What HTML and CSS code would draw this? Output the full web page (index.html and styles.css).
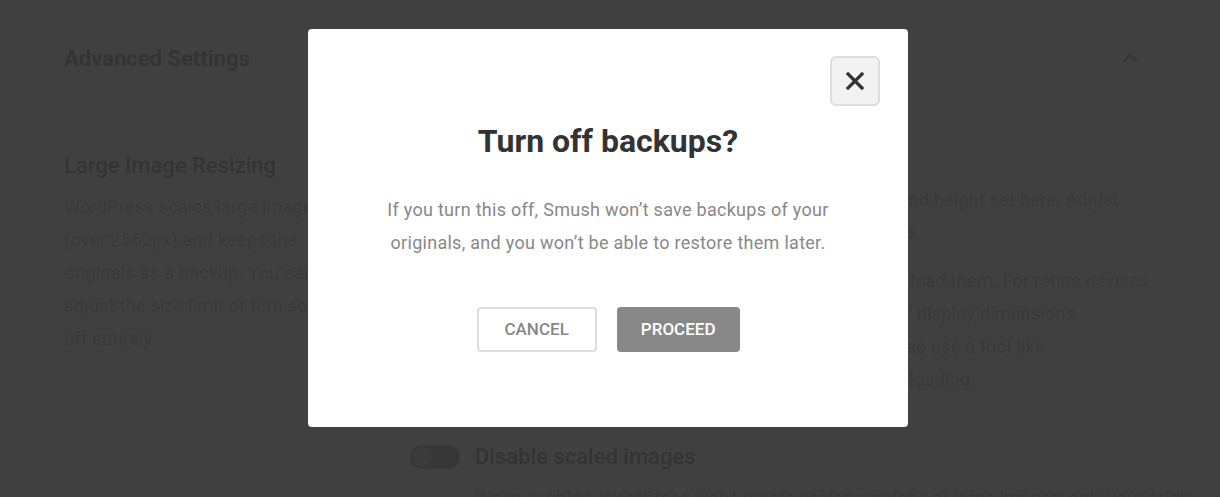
FILE: index.html
```html
<!DOCTYPE html>
<html lang="en">
<head>
<meta charset="utf-8">
<title>Turn off backups?</title>
<link rel="stylesheet" href="styles.css">
</head>
<body>
<div class="page">
  <section class="card">
    <header class="card-header">
      <h2 class="card-title">Advanced Settings</h2>
      <svg class="chevron" width="16" height="10" viewBox="0 0 16 10"><polyline points="1.5,8.5 8,2 14.5,8.5" fill="none" stroke="#666" stroke-width="2.6"/></svg>
    </header>
    <div class="card-body">
      <div class="setting-label">
        <h3 class="label-title">Large Image Resizing</h3>
        <p class="label-desc">WordPress scales large images<br>(over 2560px) and keeps the<br>originals as a backup. You can<br>adjust the size limit or turn scaling<br>off entirely.</p>
      </div>
      <div class="setting-options">
        <div class="option">
          <span class="toggle"><span class="knob"></span></span>
          <div class="option-text">
            <h4 class="option-title">Resize large images</h4>
            <p class="option-desc">Large images will be scaled down to the max width and height set here. Adjust<br>the size to suit your own theme, the default is 2560 px.</p>
            <p class="option-desc">Set these to the sizes your theme uses when visitors load them. For retina devices,<br>we’d recommend using 2x the largest of your images’ display dimensions.<br>If your website has a lot of bigger images, you can also use a tool like<br>Smush’s Lazy Load to defer all images and speed up loading.</p>
          </div>
        </div>
        <div class="option option-second">
          <span class="toggle"><span class="knob"></span></span>
          <div class="option-text">
            <h4 class="option-title">Disable scaled images</h4>
            <p class="option-desc option-desc-tight">When enabled, WordPress won’t create scaled versions of large images; only your originals are kept.</p>
          </div>
        </div>
      </div>
    </div>
  </section>
</div>

<div class="overlay">
  <div class="modal" role="dialog" aria-labelledby="modal-title">
    <button class="close" aria-label="Close">
      <svg width="18" height="18" viewBox="0 0 18 18"><path d="M2 2 L16 16 M16 2 L2 16" stroke="#333" stroke-width="3.2" stroke-linecap="square"/></svg>
    </button>
    <h1 id="modal-title" class="modal-title">Turn off backups?</h1>
    <p class="modal-text">If you turn this off, Smush won’t save backups of your<br>originals, and you won’t be able to restore them later.</p>
    <div class="modal-actions">
      <button class="btn btn-ghost">Cancel</button>
      <button class="btn btn-solid">Proceed</button>
    </div>
  </div>
</div>
</body>
</html>
```

FILE: styles.css
```css
* { box-sizing: border-box; }

html, body {
  margin: 0;
  padding: 0;
  height: 100%;
  overflow: hidden;
}

body {
  background: #f1f1f1;
  font-family: Roboto, "Liberation Sans", Arial, sans-serif;
  color: #333;
}

.page {
  padding: 0 24px;
}

.card {
  background: #fff;
  border-radius: 0 0 4px 4px;
  overflow: hidden;
}

.card-header {
  display: flex;
  align-items: center;
  justify-content: space-between;
  padding: 42px 58px 30px 40px;
  border-bottom: 1px solid #e6e6e6;
}

.card-title {
  margin: 0;
  font-size: 22px;
  line-height: 34px;
  font-weight: 700;
  color: #333;
}

.chevron {
  display: block;
  margin-top: -2px;
}

.card-body {
  display: flex;
  gap: 46px;
  padding: 45px 40px 40px 40px;
}

.setting-label {
  width: 300px;
  flex: none;
}

.label-title {
  margin: 0;
  font-size: 22px;
  line-height: 28px;
  font-weight: 500;
  color: #333;
}

.label-desc {
  margin: 10px 0 0;
  font-size: 18px;
  line-height: 33px;
  letter-spacing: 0.25px;
  color: #888;
  white-space: nowrap;
}

.setting-options {
  flex: 1;
  min-width: 0;
}

.option {
  display: flex;
  gap: 15px;
}

.option-second {
  margin-top: 47px;
}

.toggle {
  flex: none;
  position: relative;
  width: 50px;
  height: 24px;
  margin-top: 2px;
  border-radius: 12px;
  background: #666;
}

.knob {
  position: absolute;
  left: 2px;
  top: 2px;
  width: 20px;
  height: 20px;
  border-radius: 50%;
  background: #aaa;
}

.option-text {
  flex: 1;
  min-width: 0;
}

.option-title {
  margin: 0;
  font-size: 22px;
  line-height: 28px;
  font-weight: 500;
  color: #333;
}

.option-desc {
  margin: 3px 0 0;
  font-size: 18px;
  line-height: 33px;
  letter-spacing: 0.25px;
  color: #888;
  white-space: nowrap;
}

.option-desc + .option-desc {
  margin-top: 15px;
}

.option-desc-tight {
  margin-top: 10px;
}

.overlay {
  position: fixed;
  inset: 0;
  background: rgba(51, 51, 51, 0.936);
  display: flex;
  flex-direction: column;
  align-items: center;
  padding: 29px 4px 0 0;
}

.modal {
  position: relative;
  width: 600px;
  background: #fff;
  border-radius: 4px;
  padding: 92px 30px 75px;
  text-align: center;
}

.close {
  position: absolute;
  top: 27px;
  right: 28px;
  width: 50px;
  height: 50px;
  padding: 0;
  display: flex;
  align-items: center;
  justify-content: center;
  background: #f2f2f2;
  border: 2px solid #ddd;
  border-radius: 6px;
  cursor: pointer;
}

.close svg { display: block; }

.modal-title {
  margin: 0;
  font-size: 32px;
  line-height: 40px;
  font-weight: 700;
  color: #333;
}

.modal-text {
  margin: 32px 0 0;
  font-size: 18px;
  line-height: 33px;
  letter-spacing: 0.28px;
  color: #888;
}

.modal-actions {
  display: flex;
  justify-content: center;
  gap: 20px;
  margin-top: 48px;
}

.btn {
  height: 45px;
  border-radius: 4px;
  font-family: Roboto, "Liberation Sans", Arial, sans-serif;
  font-size: 17px;
  line-height: 1;
  font-weight: 500;
  text-transform: uppercase;
  cursor: pointer;
}

.btn-ghost {
  padding: 0 26px;
  background: #fff;
  border: 2px solid #ddd;
  color: #888;
}

.btn-solid {
  padding: 0 24px;
  background: #888;
  border: 0;
  color: #fff;
}
```
